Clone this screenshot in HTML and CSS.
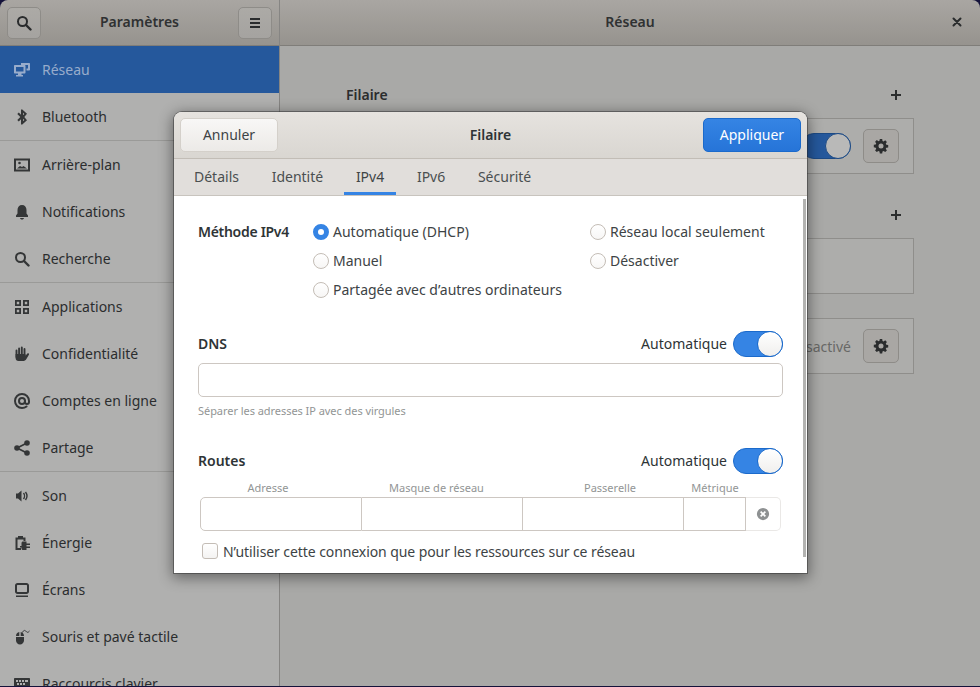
FILE: index.html
```html
<!DOCTYPE html>
<html lang="fr">
<head>
  <meta charset="utf-8">
  <title>Paramètres</title>
  <link rel="stylesheet" href="styles.css">
</head>
<body>
  <div class="window">
    <!--sidebar-->
    <div class="leftCol">
      <header class="headerbar">
        <button class="hbButton">
          <svg class="icon" viewBox="0 0 16 16"><circle cx="6.5" cy="6.5" r="4.5" fill="none" stroke="currentColor" stroke-width="2"/><path d="M10 10l4.500 4.500" stroke="currentColor" stroke-width="2.400" stroke-linecap="round"/></svg>
        </button>
        <span class="hbTitle">Paramètres</span>
        <button class="hbButton">
          <svg class="icon" viewBox="0 0 16 16"><path d="M3 3h10v2H3zM3 7h10v2H3zM3 11h10v2H3z" fill="currentColor"/></svg>
        </button>
      </header>
      <nav class="sidebar">
        <div class="row selected">
          <svg class="icon" viewBox="0 0 16 16"><path d="M1 3h9.500c.6 0 1 .4 1 1v6.500c0 .6-.4 1-1 1H7.500V13H9v1.500H2V13h2v-1.500H1c-.6 0-1-.4-1-1V4c0-.6.4-1 1-1zM2 5v4.500h7.500V5z" fill="currentColor" fill-rule="evenodd"/><path d="M7 1h8c.6 0 1 .4 1 1v5.500c0 .6-.4 1-1 1h-2.500V6.500H14V3H7z" fill="currentColor"/></svg>
          <span>Réseau</span>
        </div>
        <div class="row">
          <svg class="icon" viewBox="0 0 16 16"><path d="M7 .5h1.300L13 4.800 10.300 8 13 11.200 8.300 15.500H7V10.300L4.800 12.500 3.300 11 6.300 8 3.300 5 4.800 3.500 7 5.700zM9 3.800v2.500l1.300-1.300zM9 9.700v2.500l1.300-1.200z" fill="currentColor" fill-rule="evenodd"/></svg>
          <span>Bluetooth</span>
        </div>
        <hr class="sep">
        <div class="row">
          <svg class="icon" viewBox="0 0 16 16"><path d="M0 1.500h16v13H0zM2 3.500v9h12v-9z" fill="currentColor" fill-rule="evenodd"/><circle cx="5.500" cy="6" r="1.300" fill="currentColor"/><path d="M3 11.500l3-2.500 2 1 1.500-1 3.500 2.500z" fill="currentColor"/></svg>
          <span>Arrière-plan</span>
        </div>
        <div class="row">
          <svg class="icon" viewBox="0 0 16 16"><path d="M8 1c2.800 0 4.500 2 4.500 5v3.500l1.500 2V13H2v-1.500l1.500-2V6C3.500 3 5.200 1 8 1zM6 14h4c0 .8-.9 1.500-2 1.500S6 14.800 6 14z" fill="currentColor"/></svg>
          <span>Notifications</span>
        </div>
        <div class="row">
          <svg class="icon" viewBox="0 0 16 16"><circle cx="6.500" cy="6.500" r="4.500" fill="none" stroke="currentColor" stroke-width="2"/><path d="M10 10l4.500 4.500" stroke="currentColor" stroke-width="2.400" stroke-linecap="round"/></svg>
          <span>Recherche</span>
        </div>
        <hr class="sep">
        <div class="row">
          <svg class="icon" viewBox="0 0 16 16"><path d="M1 1h6v6H1zM2.800 2.800v2.400h2.400V2.800zM9 1h6v6H9zM10.800 2.800v2.400h2.400V2.800zM1 9h6v6H1zM2.800 10.800v2.400h2.400v-2.400zM9 9h6v6H9zM10.800 10.800v2.400h2.400v-2.400z" fill="currentColor" fill-rule="evenodd"/></svg>
          <span>Applications</span>
        </div>
        <div class="row">
          <svg class="icon" viewBox="0 0 16 16"><path d="M2.500 4.500V11M5.100 2.500V10M7.800 1.500V10M10.500 3V11" stroke="currentColor" stroke-width="1.900" stroke-linecap="round"/><path d="M1.600 8h9.800v1.800l2-2.300c.8-.8 2.100.1 1.500 1.200l-2.500 4.300c-.9 1.400-2 2-3.500 2H4.500c-1.700 0-2.900-1.200-2.900-3z" fill="currentColor"/></svg>
          <span>Confidentialité</span>
        </div>
        <div class="row">
          <svg class="icon" viewBox="0 0 16 16"><path d="M12.500 13.500C11.300 14.500 9.700 15 8 15c-3.900 0-7-3.100-7-7s3.100-7 7-7 7 3.100 7 7v1c0 1.200-1 2-2 2s-2-.8-2-2V8" fill="none" stroke="currentColor" stroke-width="2" stroke-linecap="round"/><circle cx="8" cy="8" r="3" fill="none" stroke="currentColor" stroke-width="2"/></svg>
          <span>Comptes en ligne</span>
        </div>
        <div class="row">
          <svg class="icon" viewBox="0 0 16 16"><circle cx="3" cy="8" r="2.800" fill="currentColor"/><circle cx="13" cy="3" r="2.800" fill="currentColor"/><circle cx="13" cy="13" r="2.800" fill="currentColor"/><path d="M3 8l10-5M3 8l10 5" stroke="currentColor" stroke-width="1.800"/></svg>
          <span>Partage</span>
        </div>
        <hr class="sep">
        <div class="row">
          <svg class="icon" viewBox="0 0 16 16"><path d="M2 5.500h2L7.500 2.500v11L4 10.500H2z" fill="currentColor"/><path d="M9.500 5c1.300 1.600 1.300 4.400 0 6M11.500 4c1.800 2.400 1.800 5.600 0 8" fill="none" stroke="currentColor" stroke-width="1.400"/></svg>
          <span>Son</span>
        </div>
        <div class="row">
          <svg class="icon" viewBox="0 0 16 16"><path d="M4 1h5v1.500h2.500V6h-2V4.500h-6v8.500H7v2H1.500V2.500H4z" fill="currentColor"/><path d="M9 6.500h3.500v2H16V10h-3.500v1.500H16V13h-3.500v2H9c-.8 0-1.500-.7-1.500-1.500v-1H6V11h1.500V8c0-.8.7-1.500 1.500-1.500z" fill="currentColor"/></svg>
          <span>Énergie</span>
        </div>
        <div class="row">
          <svg class="icon" viewBox="0 0 16 16"><path d="M3.500 1h9C13.900 1 15 2.100 15 3.500v6c0 1.400-1.100 2.500-2.500 2.500h-9C2.100 12 1 10.900 1 9.500v-6C1 2.100 2.100 1 3.500 1zM3.500 3c-.3 0-.5.200-.5.500v6c0 .3.200.5.500.5h9c.3 0 .5-.2.500-.5v-6c0-.3-.2-.5-.5-.5zM2 13.500h12V15H2z" fill="currentColor" fill-rule="evenodd"/></svg>
          <span>Écrans</span>
        </div>
        <div class="row">
          <svg class="icon" viewBox="0 0 16 16"><path d="M2 8h8v3.500c0 2.200-1.800 4-4 4s-4-1.800-4-4zM5.300 3.100V7H2c0-2 1.400-3.600 3.300-3.900zM6.700 3.100C8.600 3.400 10 5 10 7H6.700z" fill="currentColor"/><path d="M8.500 3.500c1-2.500 2.500-2.500 3.500-1.200s2 1.500 3.500-.3" fill="none" stroke="currentColor"/></svg>
          <span>Souris et pavé tactile</span>
        </div>
        <div class="row">
          <svg class="icon" viewBox="0 0 16 16"><path d="M1 2h14c.6 0 1 .4 1 1v10c0 .6-.4 1-1 1H1c-.6 0-1-.4-1-1V3c0-.6.4-1 1-1zM2 4v2h2V4zM5 4v2h2V4zM8 4v2h2V4zM11 4v2h3V4zM3 7v2h2V7zM6 7v2h2V7zM9 7v2h2V7zM4 10.500v1.500h8v-1.500z" fill="currentColor" fill-rule="evenodd"/></svg>
          <span>Raccourcis clavier</span>
        </div>
      </nav>
    </div>

    <!--main panel-->
    <div class="rightCol">
      <header class="headerbar mainHeader">
        <span class="hbTitle">Réseau</span>
        <svg class="icon closeIcon" viewBox="0 0 16 16"><path d="M4.500 4.500l7 7M11.500 4.500l-7 7" stroke="currentColor" stroke-width="2" stroke-linecap="round"/></svg>
      </header>
      <main class="panel">
        <div class="sectionHead">
          <span class="sectionTitle">Filaire</span>
          <svg class="icon" viewBox="0 0 16 16"><path d="M7 3h2v4h4v2H9v4H7V9H3V7h4z" fill="currentColor"/></svg>
        </div>
        <div class="box">
          <span class="switch dimSwitch"></span>
          <button class="gearButton">
            <svg class="icon" viewBox="0 0 16 16"><path d="M6.800 1h2.400l.3 1.900 1.100.5 1.600-1.100 1.700 1.700-1.100 1.600.5 1.100 1.900.3v2.400l-1.900.3-.5 1.100 1.100 1.600-1.700 1.700-1.600-1.100-1.100.5-.3 1.900H6.800l-.3-1.900-1.100-.5-1.600 1.100-1.700-1.700 1.100-1.600-.5-1.100L.8 9.200V6.800l1.900-.3.500-1.100-1.100-1.600 1.700-1.700 1.600 1.100 1.100-.5zM8 5.500a2.500 2.500 0 1 0 0 5 2.500 2.500 0 0 0 0-5z" fill="currentColor" fill-rule="evenodd"/></svg>
          </button>
        </div>
        <div class="sectionHead secondHead">
          <span></span>
          <svg class="icon" viewBox="0 0 16 16"><path d="M7 3h2v4h4v2H9v4H7V9H3V7h4z" fill="currentColor"/></svg>
        </div>
        <div class="box"></div>
        <div class="box lastBox">
          <span class="boxStatus">Désactivé</span>
          <button class="gearButton">
            <svg class="icon" viewBox="0 0 16 16"><path d="M6.800 1h2.400l.3 1.900 1.100.5 1.600-1.100 1.700 1.700-1.100 1.600.5 1.100 1.900.3v2.400l-1.900.3-.5 1.100 1.100 1.600-1.700 1.700-1.600-1.100-1.100.5-.3 1.900H6.800l-.3-1.900-1.100-.5-1.600 1.100-1.700-1.700 1.100-1.600-.5-1.100L.8 9.200V6.800l1.900-.3.500-1.100-1.100-1.600 1.700-1.700 1.600 1.100 1.100-.5zM8 5.500a2.500 2.500 0 1 0 0 5 2.500 2.500 0 0 0 0-5z" fill="currentColor" fill-rule="evenodd"/></svg>
          </button>
        </div>
      </main>
    </div>
  </div>

  <!--dialog-->
  <div class="dialog">
    <div class="dialogHead">
      <button class="dlgButton">Annuler</button>
      <span class="dialogTitle">Filaire</span>
      <button class="dlgButton applyButton">Appliquer</button>
    </div>
    <div class="tabs">
      <span class="tab">Détails</span>
      <span class="tab">Identité</span>
      <span class="tab active">IPv4</span>
      <span class="tab">IPv6</span>
      <span class="tab">Sécurité</span>
    </div>
    <div class="dialogBody">
      <div class="scrollbar"></div>
      <div class="methodGrid">
        <span class="fieldLabel methodLabel">Méthode IPv4</span>
        <label class="radioRow"><span class="radio checked"></span>Automatique (DHCP)</label>
        <label class="radioRow"><span class="radio"></span>Réseau local seulement</label>
        <span></span>
        <label class="radioRow"><span class="radio"></span>Manuel</label>
        <label class="radioRow"><span class="radio"></span>Désactiver</label>
        <span></span>
        <label class="radioRow wide"><span class="radio"></span>Partagée avec d’autres ordinateurs</label>
      </div>

      <div class="fieldHead dnsHead">
        <span class="fieldLabel">DNS</span>
        <span class="autoLabel">Automatique</span>
        <span class="switch"></span>
      </div>
      <div class="textInput"></div>
      <div class="hint">Séparer les adresses IP avec des virgules</div>

      <div class="fieldHead routesHead">
        <span class="fieldLabel">Routes</span>
        <span class="autoLabel">Automatique</span>
        <span class="switch"></span>
      </div>
      <div class="routeCols">
        <span>Adresse</span>
        <span>Masque de réseau</span>
        <span>Passerelle</span>
        <span>Métrique</span>
      </div>
      <div class="routeTable">
        <div class="cell"></div>
        <div class="cell"></div>
        <div class="cell"></div>
        <div class="cell"></div>
        <div class="cell clearCell">
          <svg class="clearIcon" viewBox="0 0 16 16"><path d="M8 1a7 7 0 1 1 0 14A7 7 0 0 1 8 1zM6 4.600L4.600 6l2 2-2 2L6 11.400l2-2 2 2 1.400-1.400-2-2 2-2L10 4.600l-2 2z" fill="currentColor" fill-rule="evenodd"/></svg>
        </div>
      </div>
      <label class="checkRow"><span class="checkbox"></span>N’utiliser cette connexion que pour les ressources sur ce réseau</label>
    </div>
  </div>
</body>
</html>
```

FILE: styles.css
```css
html, body {
  height: 100%;
  margin: 0;
  padding: 0;
  overflow: hidden;
  background-color: #14123a;
}
body {
  font-family: "Noto Sans", sans-serif;
  font-size: 14px;
  color: #2e3436;
}
button {
  font-family: inherit;
  font-size: inherit;
  padding: 0;
  margin: 0;
}
.window {
  display: flex;
  width: 980px;
  height: 686px;
  border-radius: 8px 8px 0 0;
  overflow: hidden;
}
.icon {
  width: 16px;
  height: 16px;
  flex: none;
  display: block;
}

/* header bars */
.headerbar {
  height: 45px;
  display: flex;
  align-items: center;
  justify-content: space-between;
  padding: 0 7px;
  background: linear-gradient(#a9a6a2, #96938e);
  border-bottom: 1px solid #7f7d79;
  color: #2a2c2d;
}
.hbTitle {
  font-weight: 600;
  color: #2f3132;
  margin-bottom: 2px;
}
.hbButton {
  width: 34px;
  height: 32px;
  display: flex;
  align-items: center;
  justify-content: center;
  border: 1px solid #8e8c88;
  border-radius: 5px;
  background: linear-gradient(#acaaa6, #a5a3a0);
  color: #2a2c2d;
}
.mainHeader {
  position: relative;
  justify-content: center;
}
.closeIcon {
  position: absolute;
  right: 15px;
  top: 14px;
}

/* sidebar */
.leftCol {
  width: 279px;
  flex: none;
  border-right: 1px solid #868583;
  display: flex;
  flex-direction: column;
}
.sidebar {
  flex: 1;
  overflow: hidden;
  background-color: #b0b0af;
}
.row {
  height: 47px;
  display: flex;
  align-items: center;
  gap: 12px;
  padding-left: 14px;
  color: #2b2d2e;
}
.row .icon {
  color: #343637;
}
.row.selected {
  background-color: #25589c;
  color: #98accb;
}
.row.selected .icon {
  color: #98accb;
}
.sep {
  height: 1px;
  margin: 0;
  border: none;
  background-color: #9a9a98;
}

/* main panel */
.rightCol {
  flex: 1;
  display: flex;
  flex-direction: column;
}
.panel {
  flex: 1;
  background-color: #a9a9a7;
  padding: 37px 66px 0 66px;
}
.sectionHead {
  height: 24px;
  display: flex;
  align-items: center;
  justify-content: space-between;
  padding-right: 10px;
  margin-bottom: 11px;
  color: #2b2d2e;
}
.secondHead {
  margin-top: 29px;
}
.sectionTitle {
  font-weight: 600;
  margin-bottom: 2px;
}
.box {
  height: 54px;
  border: 1px solid #8f8e8b;
  display: flex;
  align-items: center;
  justify-content: flex-end;
  gap: 12px;
  padding-right: 14px;
  background-color: #adadab;
}
.lastBox {
  margin-top: 24px;
}
.boxStatus {
  color: #686866;
}
.gearButton {
  width: 36px;
  height: 34px;
  display: flex;
  align-items: center;
  justify-content: center;
  border: 1px solid #8e8c88;
  border-radius: 5px;
  background: #a9a7a4;
  color: #2b2d2e;
}

/* switches */
.switch {
  position: relative;
  display: block;
  box-sizing: border-box;
  width: 50px;
  height: 26px;
  border-radius: 13px;
  background-color: #3584e4;
  border: 1px solid #1b6acb;
  flex: none;
}
.switch:after {
  content: "";
  position: absolute;
  top: -1px;
  right: -1px;
  width: 24px;
  height: 24px;
  border-radius: 50%;
  border: 1px solid #1b6acb;
  background: linear-gradient(#fff, #f0efed);
}
.dimSwitch {
  background-color: #25589c;
  border-color: #1c4a85;
}
.dimSwitch:after {
  border-color: #1c4a85;
  background: #b9b9b8;
}

/* dialog */
.dialog {
  position: absolute;
  left: 174px;
  top: 112px;
  width: 633px;
  height: 461px;
  border-radius: 8px 8px 0 0;
  background-color: #fff;
  box-shadow: 0 0 0 1px rgba(40, 40, 40, .45), 0 3px 14px 2px rgba(0, 0, 0, .42);
  overflow: hidden;
  display: flex;
  flex-direction: column;
}
.dialogHead {
  height: 34px;
  padding: 6px;
  display: flex;
  align-items: center;
  justify-content: space-between;
  background: linear-gradient(#e6e3df, #d9d6d1);
  border-bottom: 1px solid #c2bdb6;
  flex: none;
}
.dialogTitle {
  font-weight: 600;
  margin-bottom: 2px;
}
.dlgButton {
  width: 98px;
  height: 34px;
  padding-bottom: 2px;
  border: 1px solid #d4d0ca;
  border-radius: 5px;
  background: linear-gradient(#f8f7f6, #eceae7);
  color: #3d4345;
}
.applyButton {
  border-color: #1b6acb;
  background: linear-gradient(#3584e4, #2674d8);
  color: #fff;
}
.tabs {
  height: 36px;
  display: flex;
  gap: 8.7px;
  padding: 0 8px;
  background-color: #e1dedb;
  border-bottom: 1px solid #c8c4be;
  flex: none;
}
.tab {
  display: flex;
  align-items: center;
  padding: 0 12px 1px 12px;
  color: #4a4f50;
}
.tab.active {
  box-shadow: inset 0 -3px 0 #3584e4;
  color: #3f4445;
}
.dialogBody {
  position: relative;
  flex: 1;
  padding: 21px 24px 0 24px;
  color: #3d4345;
}
.scrollbar {
  position: absolute;
  right: 1px;
  top: 3px;
  width: 3px;
  height: 358px;
  background-color: #b3b3b1;
}
.methodGrid {
  display: grid;
  grid-template-columns: 115px 277px 1fr;
  grid-auto-rows: 29px;
  align-items: center;
}
.fieldLabel {
  font-weight: 600;
  color: #2e3436;
}
.methodLabel {
  letter-spacing: -.3px;
}
.radioRow {
  display: flex;
  align-items: center;
  gap: 4px;
}
.wide {
  white-space: nowrap;
}
.radio {
  box-sizing: border-box;
  width: 16px;
  height: 16px;
  flex: none;
  border-radius: 50%;
  border: 1px solid #c4bdb6;
  background: linear-gradient(#fff, #f7f6f5);
}
.radio.checked {
  border: 5px solid #3584e4;
  background: #fff;
}
.fieldHead {
  display: flex;
  align-items: center;
  height: 26px;
  gap: 6px;
}
.fieldHead .fieldLabel {
  flex: 1;
  margin-bottom: 2px;
}
.autoLabel {
  color: #2e3436;
  margin-bottom: 2px;
}
.dnsHead {
  margin-top: 27px;
}
.routesHead {
  margin-top: 29px;
}
.textInput {
  box-sizing: border-box;
  height: 34px;
  margin-top: 6px;
  border: 1px solid #cdc7c2;
  border-radius: 5px;
}
.hint {
  margin-top: 6px;
  height: 16px;
  line-height: 16px;
  font-size: 11px;
  letter-spacing: -.05px;
  color: #929595;
}
.routeCols {
  display: grid;
  grid-template-columns: 140px 197px 150px 60px;
  height: 17px;
  line-height: 16px;
  margin-top: 6px;
  font-size: 11px;
  color: #929595;
  text-align: center;
}
.routeTable {
  display: grid;
  grid-template-columns: 162px 161px 161px 62px 35px;
  height: 34px;
  margin-left: 2px;
  width: 581px;
}
.cell {
  border: 1px solid #cdc7c2;
  border-left: none;
}
.cell:first-child {
  border-left: 1px solid #cdc7c2;
  border-radius: 5px 0 0 5px;
}
.clearCell {
  display: flex;
  align-items: center;
  justify-content: center;
  border-color: #eae8e6;
  border-radius: 0 5px 5px 0;
}
.clearIcon {
  width: 14px;
  height: 14px;
  color: #8e9192;
}
.checkRow {
  display: flex;
  align-items: center;
  gap: 5px;
  height: 16px;
  margin: 12px 0 0 4px;
  white-space: nowrap;
  letter-spacing: -.08px;
}
.checkbox {
  box-sizing: border-box;
  width: 16px;
  height: 16px;
  border: 1px solid #c4bdb6;
  border-radius: 3px;
  background: linear-gradient(#fff, #f4f3f2);
  flex: none;
}
```
